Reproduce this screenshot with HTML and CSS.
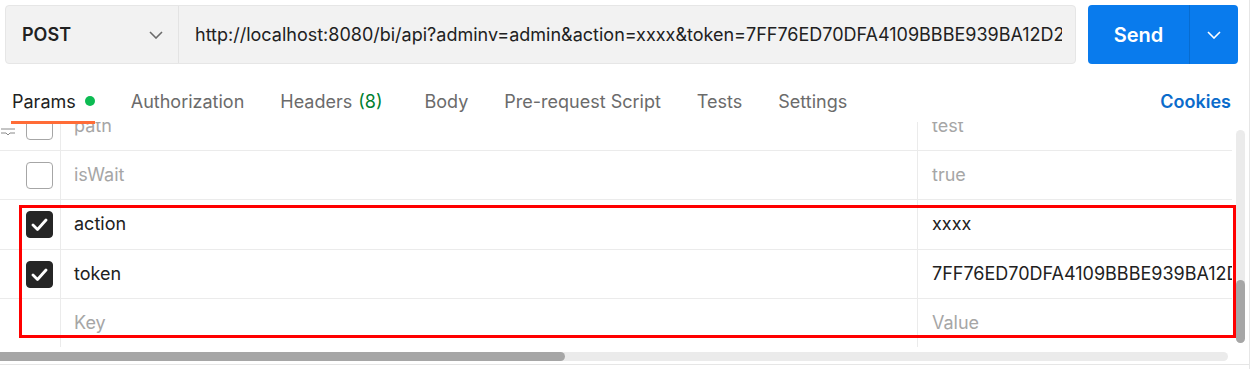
FILE: index.html
```html
<!DOCTYPE html>
<html lang="en">
<head>
<meta charset="utf-8">
<title>Request</title>
<link rel="stylesheet" href="styles.css">
</head>
<body>
<div class="app">
  <div class="topbar">
    <div class="request">
      <div class="method">
        <span class="method-name">POST</span>
        <svg class="chev" width="14" height="8" viewBox="0 0 14 8"><path d="M1 1l6 6 6-6" fill="none" stroke="#6b6b6b" stroke-width="1.6"/></svg>
      </div>
      <div class="url"><span class="url-text">http://localhost:8080/bi/api?adminv=admin&amp;action=xxxx&amp;token=7FF76ED70DFA4109BBBE939BA12D2E8A</span></div>
    </div>
    <div class="send">
      <div class="send-main">Send</div>
      <div class="send-drop">
        <svg width="14" height="8" viewBox="0 0 14 8"><path d="M1 1l6 6 6-6" fill="none" stroke="#fff" stroke-width="1.6"/></svg>
      </div>
    </div>
  </div>

  <div class="tabs">
    <div class="tab active">Params <span class="dot"></span></div>
    <div class="tab">Authorization</div>
    <div class="tab">Headers <span class="count">(8)</span></div>
    <div class="tab">Body</div>
    <div class="tab">Pre-request Script</div>
    <div class="tab">Tests</div>
    <div class="tab">Settings</div>
    <div class="spacer"></div>
    <div class="cookies">Cookies</div>
  </div>

  <div class="table-wrap">
    <div class="rows">
      <div class="row r1">
        <div class="c-check">
          <svg class="drag" width="16" height="10" viewBox="0 0 16 10"><path d="M1 2h14M1 6h5l2 2 2-2h5" fill="none" stroke="#8a8a8a" stroke-width="1"/></svg>
          <span class="box"></span>
        </div>
        <div class="c-key muted">path</div>
        <div class="c-val muted">test</div>
      </div>
      <div class="row r2">
        <div class="c-check"><span class="box"></span></div>
        <div class="c-key muted">isWait</div>
        <div class="c-val muted">true</div>
      </div>
      <div class="row r3">
        <div class="c-check"><span class="box checked"><svg width="17" height="13" viewBox="0 0 17 13"><path d="M2 7l4.5 4.5L15 2" fill="none" stroke="#fff" stroke-width="2.8" stroke-linecap="round" stroke-linejoin="round"/></svg></span></div>
        <div class="c-key">action</div>
        <div class="c-val">xxxx</div>
      </div>
      <div class="row r4">
        <div class="c-check"><span class="box checked"><svg width="17" height="13" viewBox="0 0 17 13"><path d="M2 7l4.5 4.5L15 2" fill="none" stroke="#fff" stroke-width="2.8" stroke-linecap="round" stroke-linejoin="round"/></svg></span></div>
        <div class="c-key">token</div>
        <div class="c-val">7FF76ED70DFA4109BBBE939BA12D2E8A</div>
      </div>
      <div class="row r5">
        <div class="c-check"></div>
        <div class="c-key placeholder">Key</div>
        <div class="c-val placeholder">Value</div>
      </div>
    </div>
    <div class="vscroll"><div class="vthumb"></div></div>
    <div class="highlight"></div>
  </div>

  <div class="hscroll"><div class="hthumb"></div></div>
  <div class="bottom-line"></div>
</div>
</body>
</html>
```

FILE: styles.css
```css
* { box-sizing: border-box; }
html, body { margin: 0; padding: 0; background: #fff; }
body {
  width: 1257px;
  height: 369px;
  overflow: hidden;
  font-family: Inter, "Noto Sans", sans-serif;
  color: #212121;
}
.app {
  width: 1250px;
  height: 369px;
  border-right: 1px solid #e6e6e6;
  display: flex;
  flex-direction: column;
}

/* top bar */
.topbar {
  display: flex;
  gap: 12px;
  padding: 5px 11px 0 5px;
  height: 64px;
  flex: none;
}
.request {
  flex: 1;
  display: flex;
  background: #f2f2f2;
  border: 1px solid #e6e6e6;
  border-radius: 4px;
  overflow: hidden;
}
.method {
  width: 173px;
  flex: none;
  display: flex;
  align-items: center;
  justify-content: space-between;
  padding: 0 15px 0 16px;
  border-right: 1px solid #e3e3e3;
}
.method-name { font-size: 18px; font-weight: 600; color: #212121; }
.url {
  flex: 1;
  min-width: 0;
  display: flex;
  align-items: center;
  padding-left: 16px;
  padding-right: 13px;
}
.url-text {
  display: block;
  min-width: 0;
  white-space: nowrap;
  overflow: hidden;
  font-size: 18px;
  color: #212121;
}
.send {
  width: 150px;
  flex: none;
  display: flex;
  background: #097bed;
  border-radius: 4px;
  color: #fff;
}
.send-main {
  width: 101px;
  display: flex;
  align-items: center;
  justify-content: center;
  font-size: 20px;
  font-weight: 600;
}
.send-drop {
  flex: 1;
  display: flex;
  align-items: center;
  justify-content: center;
  border-left: 1px solid rgba(0,0,0,0.12);
}

/* tabs */
.tabs {
  height: 58px;
  flex: none;
  display: flex;
  padding: 16px 18px 0 12px;
  font-size: 18px;
  position: relative;
  z-index: 2;
}
.tab {
  position: relative;
  display: flex;
  align-items: center;
  margin-right: 36px;
  color: #6b6b6b;
  white-space: nowrap;
}
.tab.active { color: #212121; }
.tab.active::after {
  content: "";
  position: absolute;
  left: -1px;
  right: 0;
  bottom: -2px;
  height: 3px;
  background: #ff6c37;
}
.dot {
  display: inline-block;
  width: 10px;
  height: 10px;
  border-radius: 50%;
  background: #0cbb52;
  margin-left: 9px;
}
.count { color: #007f31; margin-left: 6px; margin-right: 6px; }
.spacer { flex: 1; }
.cookies {
  display: flex;
  align-items: center;
  color: #0b6bcb;
  font-weight: 600;
}

/* table */
.table-wrap {
  height: 225px;
  flex: none;
  overflow: hidden;
  position: relative;
}
.rows {
  margin-top: -20px;
  width: 1232px;
}
.row {
  display: flex;
  height: 49px;
  border-bottom: 1px solid #ebebeb;
  font-size: 18px;
  line-height: 1;
}
.row.r3 { height: 50px; }
.row:last-child { border-bottom: none; }
.c-check {
  width: 61px;
  flex: none;
  border-right: 1px solid #ebebeb;
  display: flex;
  align-items: center;
  padding-left: 26px;
  position: relative;
}
.drag { position: absolute; left: 0; top: 25px; }
.box {
  width: 27px;
  height: 27px;
  border: 1px solid #a6a6a6;
  border-radius: 4px;
  background: #fff;
  display: flex;
  align-items: center;
  justify-content: center;
}
.box.checked { background: #262626; border-color: #262626; }
.c-key {
  width: 857px;
  flex: none;
  border-right: 1px solid #ebebeb;
  display: flex;
  align-items: center;
  padding-left: 13px;
  padding-bottom: 1px;
}
.c-val {
  flex: 1;
  display: flex;
  align-items: center;
  padding-left: 14px;
  padding-bottom: 1px;
  white-space: nowrap;
  overflow: hidden;
}
.muted { color: #a6a6a6; }
.placeholder { color: #a6a6a6; }

.vscroll {
  position: absolute;
  right: 4px;
  top: 8px;
  bottom: 4px;
  width: 9px;
  background: #ebebeb;
  border-radius: 5px;
  display: flex;
  flex-direction: column;
  justify-content: flex-end;
}
.vthumb { height: 63px; background: #a6a6a6; border-radius: 5px; }

.highlight {
  position: absolute;
  left: 19px;
  top: 83px;
  width: 1217px;
  height: 133px;
  border: 3px solid #ff0000;
}

.hscroll {
  margin-top: 5px;
  width: 1228px;
  height: 9px;
  flex: none;
  background: #ebebeb;
  border-radius: 0 5px 5px 0;
}
.hthumb { width: 565px; height: 9px; background: #a6a6a6; border-radius: 0 5px 5px 0; }
.bottom-line { margin-top: 3px; height: 1px; flex: none; background: #e6e6e6; }
```
